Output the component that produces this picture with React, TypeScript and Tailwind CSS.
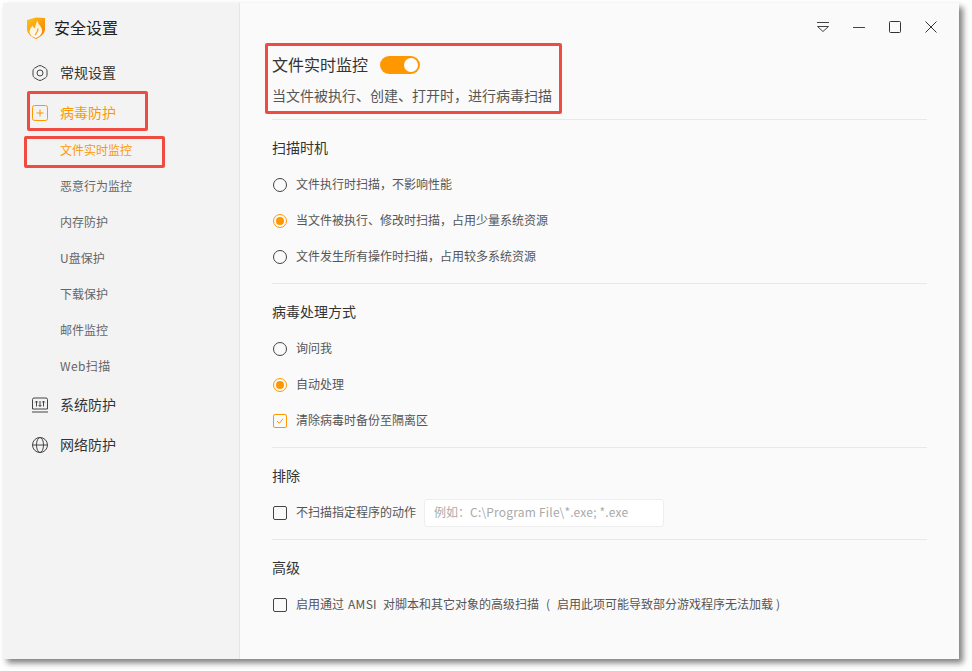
const font = { fontFamily: '"Noto Sans CJK SC", "Noto Sans", sans-serif' };

function Logo() {
  return (
    <svg width="18" height="22" viewBox="0 0 18 22">
      <defs>
        <linearGradient id="sh" x1="0" y1="0" x2="1" y2="1">
          <stop offset="0" stopColor="#ffc21a" />
          <stop offset="1" stopColor="#f57c00" />
        </linearGradient>
        <linearGradient id="fl" x1="0" y1="0" x2="0" y2="1">
          <stop offset="0" stopColor="#ffe9b8" />
          <stop offset="1" stopColor="#ffffff" />
        </linearGradient>
      </defs>
      <path d="M0 3 L9 0.5 L18 1 L18 12 C18 17 13 20 9 22 C5 20 0 17 0 12 Z" fill="url(#sh)" />
      <path d="M10.500 3.500 C11 8 16 10 15 15 C14.500 18 11.500 20 9 21 C6 20 2.500 18 2.500 14.500 C2.500 12 4.500 10.500 5.500 8.500 C6 10 6.800 11 8 11 C8.500 9 8.500 6 10.500 3.500 Z" fill="url(#fl)" />
      <path d="M10.800 11.500 C11.500 14.500 9.500 16 8 18" stroke="#f9a13a" strokeWidth="1.400" fill="none" />
    </svg>
  );
}

function GearIcon() {
  return (
    <svg width="16" height="16" viewBox="0 0 16 16" fill="none" stroke="#444" strokeWidth="1">
      <path d="M6.500 .9 Q8 .2 9.500 .9 L13.500 3.200 Q15 4.100 15 5.800 V10.200 Q15 11.900 13.500 12.800 L9.500 15.100 Q8 15.800 6.500 15.100 L2.500 12.800 Q1 11.900 1 10.200 V5.800 Q1 4.100 2.500 3.200 Z" />
      <circle cx="8" cy="8" r="3" />
    </svg>
  );
}

function VirusIcon() {
  return (
    <svg width="16" height="16" viewBox="0 0 16 16" fill="none" stroke="#ff9800" strokeWidth="1">
      <rect x="0.500" y="0.500" width="15" height="15" rx="2" />
      <path d="M8 4.500 V11.500 M4.500 8 H11.500" />
    </svg>
  );
}

function SystemIcon() {
  return (
    <svg width="16" height="16" viewBox="0 0 16 16" fill="none" stroke="#444" strokeWidth="1">
      <path d="M.5 12 V2.500 Q.5 1 2 1 H14 Q15.500 1 15.500 2.500 V12 Z" />
      <path d="M0 15 H16" />
      <path d="M4.500 4 V9.500 M8 4 V9.500 M11.500 4 V9.500 M3.200 5.500 L4.500 4 L5.800 5.500 M6.700 8 L8 9.500 L9.300 8 M10.200 5.500 L11.500 4 L12.800 5.500" />
    </svg>
  );
}

function GlobeIcon() {
  return (
    <svg width="16" height="16" viewBox="0 0 16 16" fill="none" stroke="#444" strokeWidth="1">
      <circle cx="8" cy="8" r="7.500" />
      <ellipse cx="8" cy="8" rx="3.500" ry="7.500" />
      <path d="M.5 8 H15.500" />
    </svg>
  );
}

function WindowControls() {
  return (
    <div className="flex h-12 items-center justify-end pr-[20px] gap-[20px]">
      <svg width="16" height="16" viewBox="0 0 16 16" fill="none" stroke="#444" strokeWidth="1">
        <path d="M2 3.500 H14" />
        <path d="M2.500 7.500 H13.500 L8 12.500 Z" strokeLinejoin="round" />
      </svg>
      <svg width="16" height="16" viewBox="0 0 16 16" fill="none" stroke="#444" strokeWidth="1">
        <path d="M2 8.500 H14" />
      </svg>
      <svg width="16" height="16" viewBox="0 0 16 16" fill="none" stroke="#333" strokeWidth="1">
        <rect x="2.500" y="2.500" width="11" height="11" rx="1" />
      </svg>
      <svg width="16" height="16" viewBox="0 0 16 16" fill="none" stroke="#333" strokeWidth="1">
        <path d="M2.500 2.500 L13.500 13.500 M13.500 2.500 L2.500 13.500" />
      </svg>
    </div>
  );
}

function Radio({ checked, label }: { checked?: boolean; label: string }) {
  return (
    <div className="flex h-9 items-center gap-[9px] pl-px text-xs text-[#555]">
      {checked ? (
        <span className="flex h-[14px] w-[14px] items-center justify-center rounded-full border border-[#ff9800]">
          <span className="h-2 w-2 rounded-full bg-[#ff9800]" />
        </span>
      ) : (
        <span className="h-[14px] w-[14px] rounded-full border border-[#444]" />
      )}
      <span className="mb-[2px]">{label}</span>
    </div>
  );
}

function Check({ checked, label }: { checked?: boolean; label: React.ReactNode }) {
  return (
    <div className="flex items-center gap-[9px] pl-px text-xs text-[#555]">
      {checked ? (
        <span className="flex h-[14px] w-[14px] items-center justify-center rounded-[2px] border border-[#ff9800]">
          <svg width="10" height="10" viewBox="0 0 10 10" fill="none" stroke="#ff9800" strokeWidth="1">
            <path d="M2 5 L4.300 7.300 L8 2.700" />
          </svg>
        </span>
      ) : (
        <span className="h-[14px] w-[14px] rounded-[2px] border border-[#444]" />
      )}
      <span className="mb-[2px]">{label}</span>
    </div>
  );
}

function Section({ title, children }: { title: string; children: React.ReactNode }) {
  return (
    <div className="border-t border-[#e8e8e8] pt-[18px] pb-2">
      <div className="mb-[9px] h-5 text-sm leading-[18px] text-[#333]">{title}</div>
      {children}
    </div>
  );
}

function NavItem({ icon, label, active }: { icon: React.ReactNode; label: string; active?: boolean }) {
  return (
    <div className={`flex h-10 items-center gap-3 pl-[29px] text-sm ${active ? 'text-[#ff9800]' : 'text-[#333]'}`}>
      {icon}
      <span className="mb-[2px]">{label}</span>
    </div>
  );
}

const subItems = ['文件实时监控', '恶意行为监控', '内存防护', 'U盘保护', '下载保护', '邮件监控', 'Web扫描'];

export default function App() {
  return (
    <div className="h-[671px] w-[972px] bg-white p-[3px]" style={font}>
      <div className="relative flex h-[656px] w-[956px] shadow-[4px_4px_6px_rgba(0,0,0,0.5)]">
        {/* sidebar */}
        <div className="w-[237px] shrink-0 border-r border-[#e6e6e6] bg-[#f3f3f3]">
          <div className="flex h-[50px] items-center gap-[9px] pl-6">
            <Logo />
            <span className="mb-[2px] text-base text-[#222]">安全设置</span>
          </div>
          <NavItem icon={<GearIcon />} label="常规设置" />
          <NavItem icon={<VirusIcon />} label="病毒防护" active />
          {subItems.map((item, i) => (
            <div
              key={item}
              className={`flex h-9 items-center pb-[2px] pl-[57px] text-xs ${i === 0 ? 'text-[#ff9800]' : 'text-[#666]'} ${item === 'Web扫描' ? 'tracking-[0.4px]' : ''}`}
            >
              {item}
            </div>
          ))}
          <NavItem icon={<SystemIcon />} label="系统防护" />
          <NavItem icon={<GlobeIcon />} label="网络防护" />
        </div>

        {/* main panel */}
        <div className="flex-1 bg-[#fafafa]">
          <WindowControls />
          <div className="px-8">
            <div className="flex h-7 items-center gap-3 text-base text-[#333]">
              <span className="mb-[2px]">文件实时监控</span>
              <span className="flex h-[18px] w-10 items-center justify-end rounded-full bg-[#ff9800] pr-[2px]">
                <span className="h-[14px] w-[14px] rounded-full bg-white" />
              </span>
            </div>
            <div className="mt-1 h-9 text-sm leading-6 text-[#555]">当文件被执行、创建、打开时，进行病毒扫描</div>

            <Section title="扫描时机">
              <Radio label="文件执行时扫描，不影响性能" />
              <Radio checked label="当文件被执行、修改时扫描，占用少量系统资源" />
              <Radio label="文件发生所有操作时扫描，占用较多系统资源" />
            </Section>

            <Section title="病毒处理方式">
              <Radio label="询问我" />
              <Radio checked label="自动处理" />
              <div className="flex h-9 items-center">
                <Check checked label="清除病毒时备份至隔离区" />
              </div>
            </Section>

            <Section title="排除">
              <div className="flex h-9 items-center gap-2">
                <Check label="不扫描指定程序的动作" />
                <div className="flex h-7 w-[240px] items-center rounded-[3px] border border-[#eeeeee] bg-white pb-[2px] pl-[9px] text-xs text-[#aaa]">
                  例如：<span className="tracking-[0.2px]">C:\Program File\*.exe; *.exe</span>
                </div>
              </div>
            </Section>

            <Section title="高级">
              <div className="flex h-9 items-center">
                <Check
                  label={
                    <>
                      启用通过<span className="mr-[6px] ml-1 tracking-[0.3px]">AMSI</span>对脚本和其它对象的高级扫描
                      <span className="mx-[7px]">(</span>启用此项可能导致部分游戏程序无法加载
                      <span className="ml-[3px]">)</span>
                    </>
                  }
                />
              </div>
            </Section>
          </div>
        </div>

        {/* red annotation boxes */}
        <div className="absolute left-[262px] top-[40px] h-[71px] w-[297px] rounded-[2px] border-[3px] border-[#ef4b40]" />
        <div className="absolute left-[24px] top-[88px] h-[40px] w-[121px] rounded-[2px] border-[3px] border-[#ef4b40]" />
        <div className="absolute left-[21px] top-[133px] h-[32px] w-[141px] rounded-[2px] border-[3px] border-[#ef4b40]" />
      </div>
    </div>
  );
}
